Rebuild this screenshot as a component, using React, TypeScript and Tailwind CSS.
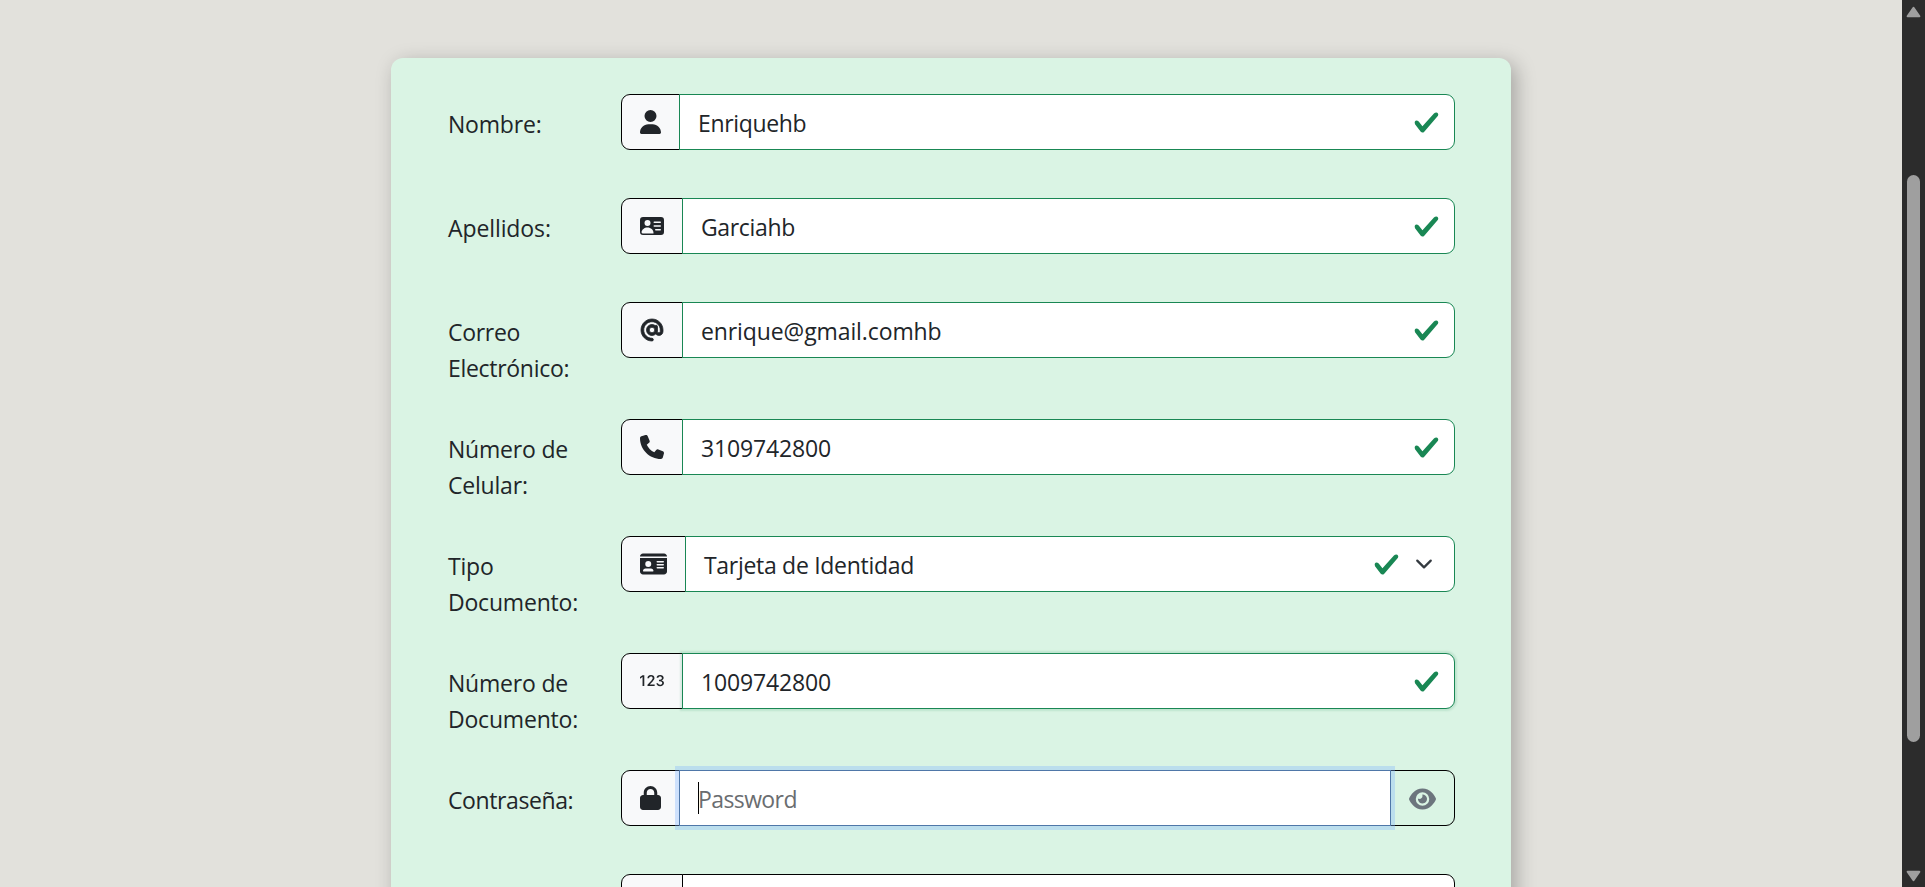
import type { ReactNode } from "react";
import { FaAt, FaEye, FaIdCard, FaLock, FaPhone, FaUser } from "react-icons/fa6";
import { BsPersonVcardFill, Bs123 } from "react-icons/bs";

function Check() {
  return (
    <svg viewBox="0 0 8 8" className="size-[27px] shrink-0" fill="#198754">
      <path d="M2.3 6.73.6 4.53c-.4-1.04.46-1.4 1.1-.8l1.1 1.4 3.4-3.8c.6-.63 1.6-.27 1.2.7l-4 4.6c-.43.5-.8.4-1.1.1z" />
    </svg>
  );
}

function Chevron() {
  return (
    <svg viewBox="0 0 16 16" className="h-[18px] w-6 shrink-0" fill="none" stroke="#343a40" strokeWidth="2" strokeLinecap="round" strokeLinejoin="round">
      <path d="m2 5 6 6 6-6" />
    </svg>
  );
}

type RowProps = { lines: string[]; icon: ReactNode; children: ReactNode; tracking?: string };

function Row({ lines, icon, children, tracking = "tracking-[-0.2px]" }: RowProps) {
  return (
    <div className={lines.length > 1 ? "flex h-[117px]" : "flex h-[104px]"}>
      <label className={`w-[173px] shrink-0 pt-3 ${tracking}`}>
        {lines.map((line) => (
          <span key={line} className="block whitespace-nowrap">
            {line}
          </span>
        ))}
      </label>
      <div className="flex h-14 w-[834px]">
        <span className="flex shrink-0 items-center rounded-l-[9px] border border-black bg-[#f8f9fa] px-[18px]">
          {icon}
        </span>
        {children}
      </div>
    </div>
  );
}

type ValidProps = { value: string; glow?: boolean; select?: boolean; tracking?: string };

function Valid({ value, glow = false, select = false, tracking = "tracking-[-0.1px]" }: ValidProps) {
  return (
    <div
      className={`-ml-px flex grow items-center rounded-r-[9px] border border-[#198754] bg-white pl-[18px] ${
        glow ? "shadow-[0_0_2px_2px_rgba(25,135,84,0.14)]" : ""
      } ${select ? "pr-[18px]" : "pr-[14px]"}`}
    >
      <span className={`grow pt-0.5 whitespace-nowrap ${tracking}`}>{value}</span>
      <Check />
      {select && (
        <span className="ml-3">
          <Chevron />
        </span>
      )}
    </div>
  );
}

function Scrollbar() {
  return (
    <div className="flex h-full w-[23px] shrink-0 flex-col items-center bg-[#2c2c2c] pt-[6px] pb-[5px]">
      <svg viewBox="0 0 15 12" className="h-3 w-[15px]" fill="#9f9f9f" stroke="#9f9f9f" strokeWidth="2" strokeLinejoin="round">
        <path d="M7.5 1.7 13.4 10.2H1.6Z" />
      </svg>
      <div className="mt-[157px] h-[567px] w-[13px] rounded-full bg-[#9f9f9f]" />
      <svg viewBox="0 0 15 12" className="mt-auto h-3 w-[15px]" fill="#9f9f9f" stroke="#9f9f9f" strokeWidth="2" strokeLinejoin="round">
        <path d="M7.5 10.3 13.4 1.8H1.6Z" />
      </svg>
    </div>
  );
}

export default function App() {
  return (
    <div className="flex h-[887px] w-[1925px] overflow-hidden bg-[#e2e1dc] font-['Open_Sans',sans-serif] text-[23px] leading-9 text-[#212529]">
      <main className="flex h-full w-[1902px] justify-center overflow-hidden pt-[58px]">
        <form className="h-[1000px] w-[1120px] shrink-0 rounded-t-xl bg-[#daf4e4] pt-9 pl-[57px] shadow-[5px_5px_20px_rgba(0,0,0,0.27)]">
          <Row lines={["Nombre:"]} icon={<FaUser className="h-6 w-[21px]" />}>
            <Valid value="Enriquehb" tracking="tracking-[-0.35px]" />
          </Row>
          <Row lines={["Apellidos:"]} tracking="tracking-[-0.1px]" icon={<BsPersonVcardFill className="size-6" />}>
            <Valid value="Garciahb" tracking="tracking-[-0.35px]" />
          </Row>
          <Row
            lines={["Correo", "Electrónico:"]}
            tracking="tracking-[-0.3px]"
            icon={<FaAt className="mx-px size-[22px] overflow-visible" strokeWidth={18} />}
          >
            <Valid value="enrique@gmail.comhb" />
          </Row>
          <Row lines={["Número de", "Celular:"]} icon={<FaPhone className="size-6" />}>
            <Valid value="3109742800" tracking="tracking-[-0.15px]" />
          </Row>
          <Row lines={["Tipo", "Documento:"]} icon={<FaIdCard className="h-6 w-[27px]" />}>
            <Valid value="Tarjeta de Identidad" tracking="tracking-[-0.3px]" select />
          </Row>
          <Row lines={["Número de", "Documento:"]} icon={<Bs123 className="size-6" />}>
            <Valid value="1009742800" tracking="tracking-[-0.15px]" glow />
          </Row>
          <Row lines={["Contraseña:"]} tracking="tracking-[-0.4px]" icon={<FaLock className="h-6 w-[21px]" />}>
            <div className="z-10 -ml-px flex grow items-center border border-[#4f77a8] bg-white pl-[18px] text-[#6a6d70] shadow-[0_0_0_4px_rgba(130,180,254,0.35)]">
              <span className="h-8 w-px bg-black" />
              <span className="-ml-px pt-0.5 tracking-[-0.6px]">Password</span>
            </div>
            <div className="-ml-px flex w-[65px] items-center justify-center rounded-r-[9px] border border-black pt-0.5">
              <FaEye className="h-6 w-[27px] text-[#6c757d]" />
            </div>
          </Row>
          <Row lines={[]} icon={<FaLock className="size-6" />}>
            <div className="-ml-px grow rounded-r-[9px] border border-black bg-white" />
          </Row>
        </form>
      </main>
      <Scrollbar />
    </div>
  );
}
